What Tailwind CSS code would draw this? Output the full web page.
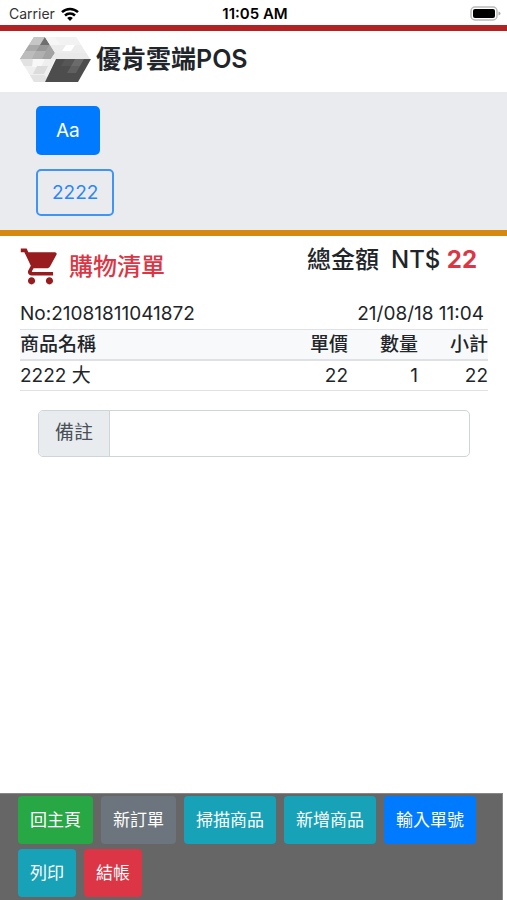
<!DOCTYPE html>
<html lang="zh-Hant">
<head>
  <meta charset="UTF-8">
  <meta name="viewport" content="width=device-width, initial-scale=1">
  <title>優肯雲端POS</title>
  <script src="https://cdn.jsdelivr.net/npm/@tailwindcss/browser@4"></script>
</head>
<body class="min-h-screen flex flex-col bg-white text-[#212529] font-['Inter','Noto_Sans_CJK_TC',sans-serif]">

  <!-- Status bar -->
  <div class="grid grid-cols-3 items-center h-[25px] pl-[9px] pr-[6px] pt-[2px] text-[14px] leading-5 text-black">
    <div class="flex items-center gap-[6px]">
      <span class="text-[#333]">Carrier</span>
      <svg class="w-[18px] h-[14px]" viewBox="0 0 18 14" fill="none" stroke="#000" stroke-width="2.5">
        <path d="M1 5.2a11.6 11.6 0 0 1 16 0" />
        <path d="M4 8.5a7.2 7.2 0 0 1 10 0" />
        <path d="M9 14l-2.8-3a4 4 0 0 1 5.6 0z" fill="#000" stroke="none" />
      </svg>
    </div>
    <span class="text-center text-[15px] font-semibold">11:05 AM</span>
    <svg class="justify-self-end w-[31px] h-[15px]" viewBox="0 0 31 15">
      <rect x="1" y="1" width="26" height="13" rx="4" fill="#fff" stroke="#bbb" stroke-width="1.5" />
      <rect x="3" y="3" width="22" height="9" rx="2" fill="#000" />
      <path d="M28.5 5.5q2 .5 2 2t-2 2z" fill="#aaa" />
    </svg>
  </div>

  <header class="flex items-center gap-[5px] h-[67px] border-t-6 border-[#b22222] pl-5 pb-[5px]">
    <svg class="w-[71px] h-[46px]" viewBox="0 0 71 46">
      <!-- left faces -->
      <path d="M14 1h11l10 16-4 6H0z" fill="#b4b4b4" />
      <path d="M14 1h11l-5 8H9z" fill="#c6c6c6" />
      <path d="M9 9h11l-4 6H5z" fill="#a9a9a9" />
      <path d="M5 15h11l-4 8H0z" fill="#bcbcbc" />
      <path d="M20 9h10l-4 6H16z" fill="#989898" />
      <path d="M16 15h10l-4 8H12z" fill="#b0b0b0" />
      <path d="M25 1l5 8H20z" fill="#6f6f6f" />
      <path d="M26 15l4-6 5 8-4 6h-9z" fill="#a2a2a2" />
      <path d="M0 23h35L25 46H14z" fill="#efefef" />
      <path d="M0 23h12l5 7H4z" fill="#e2e2e2" />
      <path d="M13 23h12l-4 8h-9z" fill="#f8f8f8" />
      <path d="M17 30h11l-4 8H13z" fill="#dcdcdc" />
      <path d="M10 39h14l3 3-2 4H14z" fill="#e3e3e3" />
      <!-- top face -->
      <path d="M25 1h31l14 22H31l4-6z" fill="#ececec" />
      <path d="M35 1h21l5 8H41z" fill="#f2f2f2" />
      <path d="M25 1h10l6 8H30z" fill="#f6f6f6" />
      <path d="M46 9h9l-4 6h-9z" fill="#fff" />
      <path d="M31 23l4-6h31l4 6z" fill="#e9e9e9" />
      <!-- front face -->
      <path d="M36 23h35L58 46H25z" fill="#4d4d4d" />
      <path d="M45 23h10l-4 7H41z" fill="#565656" />
      <path d="M55 23h9l-4 7h-9z" fill="#6b6b6b" />
      <path d="M51 30h9l-4 7h-9z" fill="#606060" />
    </svg>
    <h1 class="text-[25px] leading-9 font-semibold">優肯雲端POS</h1>
  </header>

  <!-- Categories -->
  <section class="flex flex-col items-start gap-[14px] bg-[#e9ebee] border-b-6 border-[#d68910] pl-9 py-[14px] text-[19px] leading-[29px]">
    <button class="h-[49px] px-5 rounded-[5px] bg-[#007bff] text-white">Aa</button>
    <button class="h-[47px] px-[14px] rounded-[5px] border-2 border-[#3f94f5] text-[#2986f5]">2222</button>
  </section>

  <main class="flex-1 pl-5 pr-[19px]">
    <div class="flex justify-between items-start pt-[9px]">
      <h2 class="flex items-center gap-[7px] text-[24px] leading-[42px] font-medium text-[#dc3545]">
        <svg class="w-[43px] h-[43px] -ml-[1px]" viewBox="0 0 24 24" fill="#981b1e">
          <path d="M7 18c-1.1 0-1.99.9-1.99 2S5.9 22 7 22s2-.9 2-2-.9-2-2-2zM1 2v2h2l3.6 7.59-1.35 2.45c-.16.28-.25.61-.25.96 0 1.1.9 2 2 2h12v-2H7.42c-.14 0-.25-.11-.25-.25l.03-.12.9-1.63h7.45c.75 0 1.41-.41 1.75-1.03l3.58-6.49A1 1 0 0 0 20 4H5.21l-.94-2H1zm16 16c-1.1 0-1.99.9-1.99 2s.89 2 1.99 2 2-.9 2-2-.9-2-2-2z" />
        </svg>
        購物清單
      </h2>
      <p class="flex gap-3 pr-[11px] text-[24px] leading-[30px] font-medium">
        <span>總金額</span>
        <span>NT$ <b class="font-bold text-[#dc3545]">22</b></span>
      </p>
    </div>

    <div class="flex justify-between pt-[11px] pr-1 text-[19px] leading-[30px]">
      <span>No:21081811041872</span>
      <span>21/08/18 11:04</span>
    </div>
    <table class="w-full text-[19px] leading-[29px] text-right">
      <thead class="bg-[#f8f9fa] border-t border-b-2 border-[#dee2e6]">
        <tr>
          <th class="text-left font-medium">商品名稱</th>
          <th class="w-[70px] font-medium">單價</th>
          <th class="w-[70px] font-medium">數量</th>
          <th class="w-[70px] font-medium">小計</th>
        </tr>
      </thead>
      <tbody>
        <tr class="border-b border-[#dee2e6]">
          <td class="text-left">2222 大</td>
          <td>22</td>
          <td>1</td>
          <td>22</td>
        </tr>
      </tbody>
    </table>

    <div class="flex h-[47px] mt-[19px] mx-[18px] border border-[#ced4da] rounded-[5px] text-[19px]">
      <label for="note" class="flex items-center px-4 rounded-l-[4px] bg-[#e9ecef] border-r border-[#ced4da] text-[#495057]">備註</label>
      <input type="text" id="note" class="flex-1 min-w-0 px-4 outline-none">
    </div>
  </main>

  <!-- Actions -->
  <footer class="flex flex-wrap gap-x-2 gap-y-[5px] mr-1 pl-[18px] pt-[2px] pb-[3px] bg-[#666] border-t border-r border-[#888] text-[17px] leading-6 text-white">
    <button class="h-12 px-3 rounded-[4px] bg-[#28a745]">回主頁</button>
    <button class="h-12 px-3 rounded-[4px] bg-[#6c757d]">新訂單</button>
    <button class="h-12 px-3 rounded-[4px] bg-[#17a2b8]">掃描商品</button>
    <button class="h-12 px-3 rounded-[4px] bg-[#17a2b8]">新增商品</button>
    <button class="h-12 px-3 rounded-[4px] bg-[#007bff]">輸入單號</button>
    <button class="h-12 px-3 rounded-[4px] bg-[#17a2b8]">列印</button>
    <button class="h-12 px-3 rounded-[4px] bg-[#dc3545]">結帳</button>
  </footer>

</body>
</html>
